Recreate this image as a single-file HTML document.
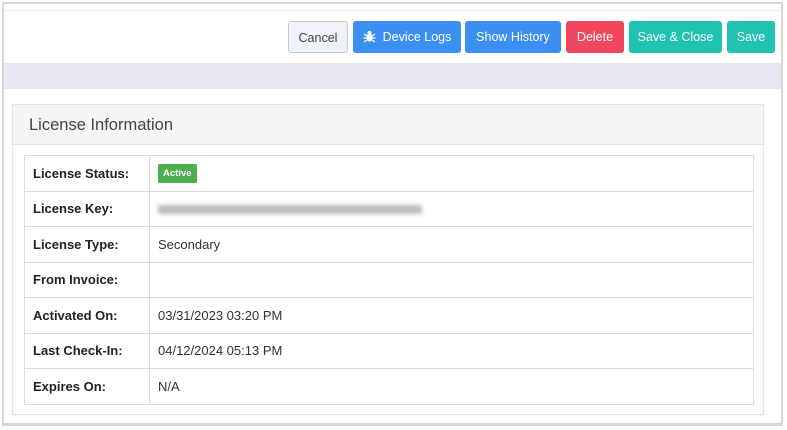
<!DOCTYPE html>
<html><head><style>
*{box-sizing:border-box;margin:0;padding:0}
body{width:787px;height:430px;background:#fff;font-family:"Liberation Sans",sans-serif;position:relative;overflow:hidden;font-size:13px;color:#333}
.frame{position:absolute;left:2px;top:2px;width:781px;height:424px;border:2px solid #d6d6d6;border-bottom-width:3px;background:#fff}
.topline{position:absolute;left:4px;top:10px;width:776px;height:1px;background:#eee}
.band{position:absolute;left:4px;top:63px;width:777px;height:26px;background:#e6e7f0}
.btn{position:absolute;top:21px;height:32px;border-radius:3px;color:#fff;font-size:12.5px;line-height:32px;text-align:center}
.card{position:absolute;left:12px;top:104px;width:752px;height:311px;border:1px solid #e4e4e4;background:#fff;box-shadow:0 1px 2px rgba(0,0,0,.06)}
.hdr{height:40px;background:#f5f5f5;border-bottom:1px solid #e4e4e4;font-size:16.5px;line-height:40px;padding-left:16px;color:#444}
table{position:absolute;left:11px;top:50px;width:730px;border-collapse:collapse}
td{border:1px solid #ddd;height:35.5px;font-size:13px;padding-left:8px;color:#333}
td.l{width:125px;font-weight:bold;color:#222}
.badge{display:inline-block;background:#4cae4c;color:#fff;font-size:9.5px;font-weight:bold;padding:0 5px;height:19px;line-height:19px;border-radius:2px}
.blur{display:inline-block;width:264px;height:9px;background:#aaa;filter:blur(2px);opacity:.8;vertical-align:middle}
</style></head><body>
<div class="frame"></div>
<div class="topline"></div>
<div class="band"></div>
<div class="btn" style="left:288px;width:60px;background:#eef2f9;border:1px solid #c9ccd2;color:#444">Cancel</div>
<div class="btn" style="left:353px;width:108px;background:#3a8ff0"><svg width="13" height="13" viewBox="0 0 13 13" style="vertical-align:-2px;margin-right:7px"><ellipse cx="6.5" cy="7.5" rx="3.2" ry="4" fill="#fff"/><circle cx="6.5" cy="3" r="2" fill="#fff"/><path d="M1 4l3 2M12 4l-3 2M0.5 8h3M12.5 8h-3M1 12l3-2M12 12l-3-2" stroke="#fff" stroke-width="1.3"/></svg>Device Logs</div>
<div class="btn" style="left:465px;width:96px;background:#3a8ff0">Show History</div>
<div class="btn" style="left:566px;width:58px;background:#f0475f">Delete</div>
<div class="btn" style="left:629px;width:93px;background:#20c2b2">Save &amp; Close</div>
<div class="btn" style="left:727px;width:48px;background:#20c2b2">Save</div>
<div class="card">
<div class="hdr">License Information</div>
<table>
<tr><td class="l">License Status:</td><td><span class="badge">Active</span></td></tr>
<tr><td class="l">License Key:</td><td><span class="blur"></span></td></tr>
<tr><td class="l">License Type:</td><td>Secondary</td></tr>
<tr><td class="l">From Invoice:</td><td></td></tr>
<tr><td class="l">Activated On:</td><td>03/31/2023 03:20 PM</td></tr>
<tr><td class="l">Last Check-In:</td><td>04/12/2024 05:13 PM</td></tr>
<tr><td class="l">Expires On:</td><td>N/A</td></tr>
</table>
</div>
</body></html>
